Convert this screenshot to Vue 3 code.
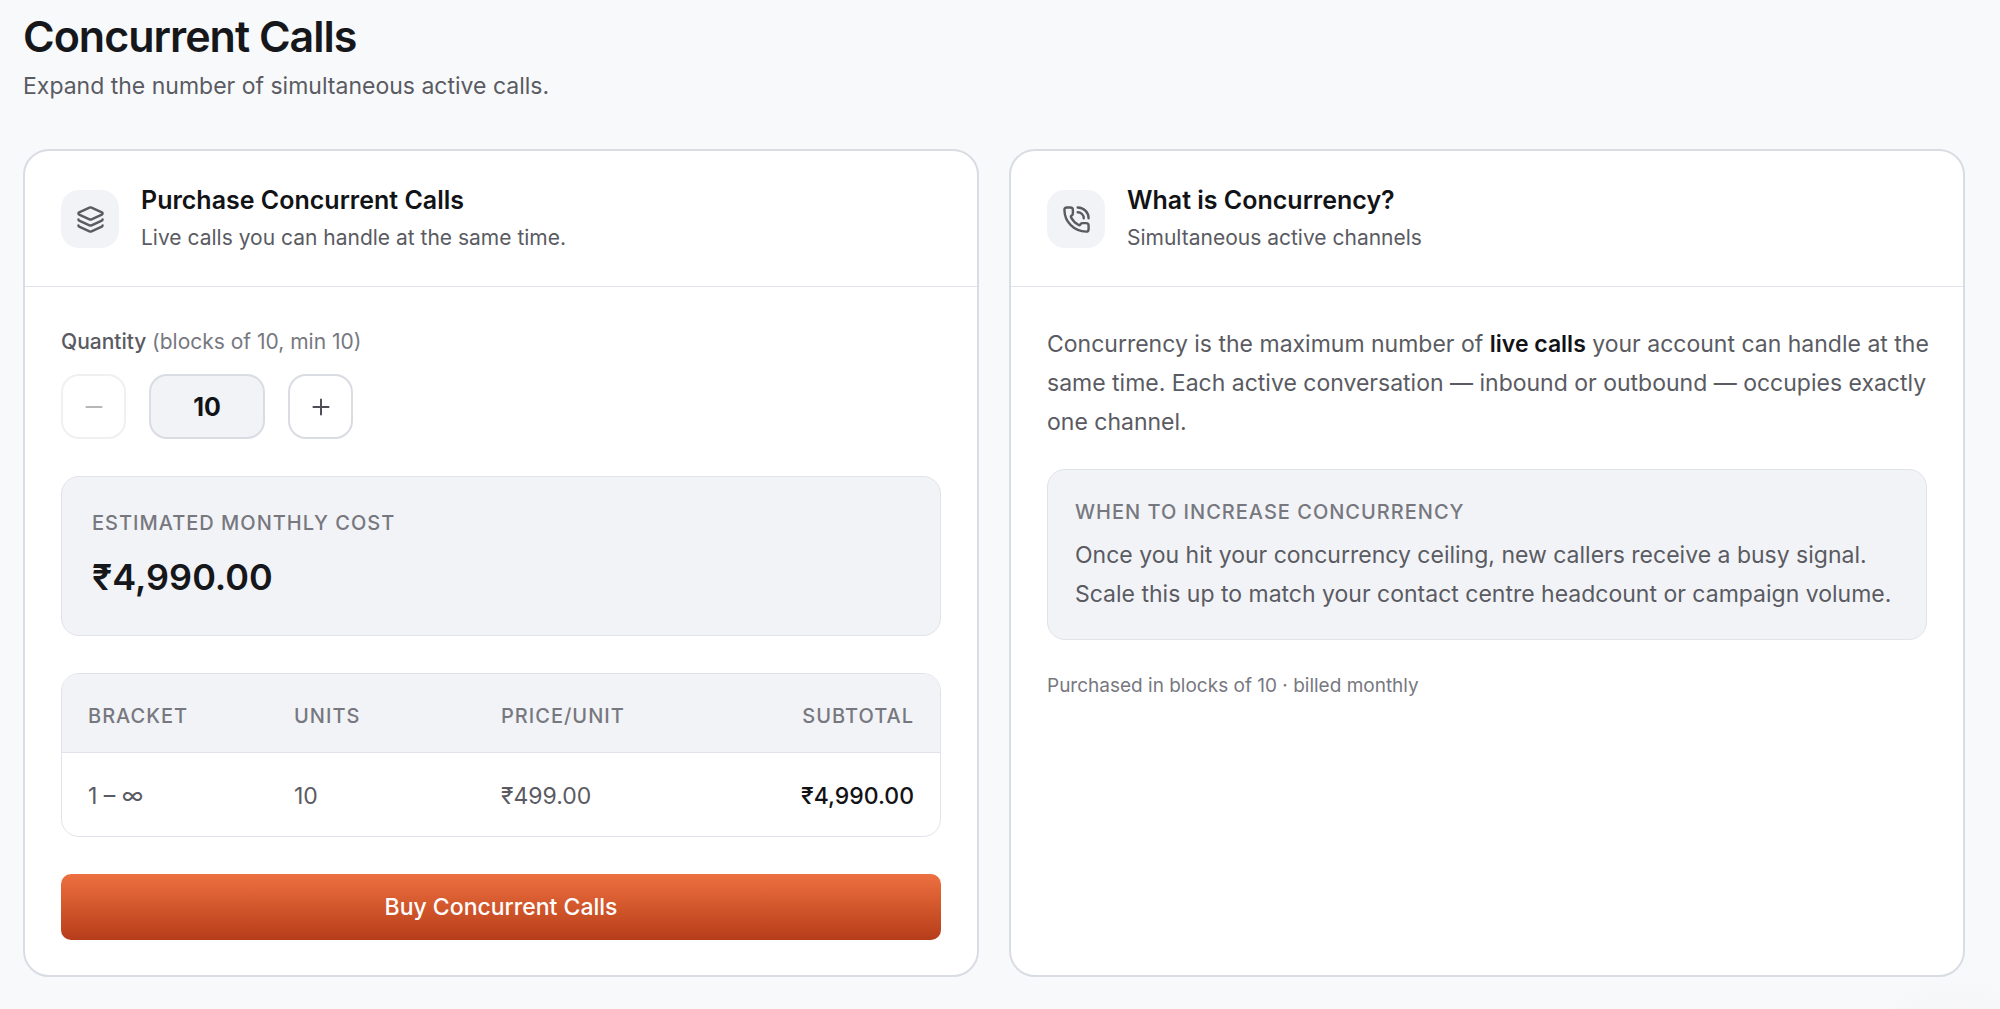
<script setup>
import { computed, ref } from 'vue'

const BLOCK = 10
const UNIT_PRICE = 499

const quantity = ref(BLOCK)
const atMinimum = computed(() => quantity.value <= BLOCK)

const money = (value) =>
  '₹' + value.toLocaleString('en-IN', { minimumFractionDigits: 2, maximumFractionDigits: 2 })

const total = computed(() => money(quantity.value * UNIT_PRICE))

const rows = computed(() => [
  { bracket: '1 – ∞', units: quantity.value, price: money(UNIT_PRICE), subtotal: total.value }
])

function step(direction) {
  quantity.value = Math.max(BLOCK, quantity.value + direction * BLOCK)
}
</script>

<template>
  <main class="page">
    <header class="page-head">
      <h1>Concurrent Calls</h1>
      <p>Expand the number of simultaneous active calls.</p>
    </header>

    <div class="cards">
      <section class="card">
        <header class="card-head">
          <span class="badge">
            <svg class="icon" viewBox="0 0 24 24" aria-hidden="true">
              <path d="M12.83 2.18a2 2 0 0 0-1.66 0L2.6 6.08a1 1 0 0 0 0 1.83l8.58 3.91a2 2 0 0 0 1.66 0l8.58-3.9a1 1 0 0 0 0-1.83z" />
              <path d="M2 12a1 1 0 0 0 .58.91l8.6 3.91a2 2 0 0 0 1.65 0l8.58-3.9A1 1 0 0 0 22 12" />
              <path d="M2 17a1 1 0 0 0 .58.91l8.6 3.91a2 2 0 0 0 1.65 0l8.58-3.9A1 1 0 0 0 22 17" />
            </svg>
          </span>
          <div class="card-title">
            <h2>Purchase Concurrent Calls</h2>
            <p>Live calls you can handle at the same time.</p>
          </div>
        </header>

        <div class="card-body purchase">
          <div class="quantity">
            <label for="quantity">Quantity <span>(blocks of 10, min 10)</span></label>
            <div class="stepper">
              <button type="button" aria-label="Decrease quantity" :disabled="atMinimum" @click="step(-1)">
                <svg class="sign" viewBox="0 0 24 24" aria-hidden="true"><path d="M5 12h14" /></svg>
              </button>
              <input id="quantity" type="text" inputmode="numeric" readonly :value="quantity" />
              <button type="button" aria-label="Increase quantity" @click="step(1)">
                <svg class="sign" viewBox="0 0 24 24" aria-hidden="true"><path d="M5 12h14M12 5v14" /></svg>
              </button>
            </div>
          </div>

          <div class="panel cost">
            <p class="eyebrow">Estimated monthly cost</p>
            <p class="amount">{{ total }}</p>
          </div>

          <div class="table-frame">
            <table>
              <thead>
                <tr>
                  <th scope="col">Bracket</th>
                  <th scope="col">Units</th>
                  <th scope="col">Price/unit</th>
                  <th scope="col">Subtotal</th>
                </tr>
              </thead>
              <tbody>
                <tr v-for="row in rows" :key="row.bracket">
                  <td>{{ row.bracket }}</td>
                  <td>{{ row.units }}</td>
                  <td>{{ row.price }}</td>
                  <td>{{ row.subtotal }}</td>
                </tr>
              </tbody>
            </table>
          </div>

          <button type="button" class="buy">Buy Concurrent Calls</button>
        </div>
      </section>

      <section class="card">
        <header class="card-head">
          <span class="badge">
            <svg class="icon" viewBox="0 0 24 24" aria-hidden="true">
              <path d="M13 2a9 9 0 0 1 9 9" />
              <path d="M13 6a5 5 0 0 1 5 5" />
              <path d="M13.832 16.568a1 1 0 0 0 1.213-.303l.355-.465A2 2 0 0 1 17 15h3a2 2 0 0 1 2 2v3a2 2 0 0 1-2 2A18 18 0 0 1 2 4a2 2 0 0 1 2-2h3a2 2 0 0 1 2 2v3a2 2 0 0 1-.8 1.6l-.468.351a1 1 0 0 0-.292 1.233 14 14 0 0 0 6.392 6.384" />
            </svg>
          </span>
          <div class="card-title">
            <h2>What is Concurrency?</h2>
            <p>Simultaneous active channels</p>
          </div>
        </header>

        <div class="card-body about">
          <p class="copy lead">
            Concurrency is the maximum number of <strong>live calls</strong> your account can handle at the
            same time. Each active conversation — inbound or outbound — occupies exactly one channel.
          </p>
          <div class="panel hint">
            <p class="eyebrow">When to increase concurrency</p>
            <p class="copy">
              Once you hit your concurrency ceiling, new callers receive a busy signal. Scale this up to
              match your contact centre headcount or campaign volume.
            </p>
          </div>
          <p class="note">Purchased in blocks of 10 · billed monthly</p>
        </div>
      </section>
    </div>
  </main>
</template>

<style>
body {
  margin: 0;
  background: #f8f9fb;
}
</style>

<style scoped>
.page {
  box-sizing: border-box;
  min-height: 100vh;
  padding: 10px 35px 31px 23px;
  background: radial-gradient(circle 100px at calc(100% - 45px) calc(100% + 64px), #f4f4f5 40%, #f8f9fb 100%);
  color: #5a5b62;
  font-family: Inter, "Noto Sans", sans-serif;
  font-size: 23px;
}

h1,
h2,
p {
  margin: 0;
}

.page-head {
  margin-bottom: 47px;
}

h1 {
  color: #16171a;
  font-size: 43px;
  font-weight: 600;
  line-height: 52px;
  letter-spacing: -1px;
}

.page-head p {
  margin-top: 8px;
  line-height: 32px;
}

.cards {
  display: grid;
  grid-template-columns: repeat(auto-fit, minmax(min(100%, 640px), 1fr));
  gap: 30px;
}

.card {
  border: 2px solid #dadce3;
  border-radius: 26px;
  background: #fff;
}

.card-head {
  display: flex;
  align-items: center;
  gap: 22px;
  padding: 34px 36px 33px;
  border-bottom: 1px solid #e1e3ea;
}

.badge {
  display: grid;
  flex: none;
  place-items: center;
  width: 58px;
  height: 58px;
  border-radius: 18px;
  background: #f2f3f7;
}

.icon,
.sign {
  fill: none;
  stroke: currentColor;
  stroke-linecap: round;
  stroke-linejoin: round;
}

.icon {
  width: 29px;
  height: 29px;
  stroke-width: 2;
}

.sign {
  width: 26px;
  height: 26px;
  stroke-width: 1.8;
}

.card-title {
  display: grid;
  gap: 8px;
  line-height: 30px;
}

h2 {
  color: #121316;
  font-size: 25px;
  font-weight: 600;
}

.card-title p {
  font-size: 21px;
}

.card-body {
  padding: 38px 36px 35px;
}

.purchase {
  display: grid;
  gap: 37px;
}

.quantity {
  display: grid;
  gap: 15px;
  font-size: 21px;
  line-height: 34px;
}

.quantity label {
  font-weight: 500;
}

.quantity label span {
  color: #77787f;
  font-weight: 400;
}

.stepper {
  display: flex;
  gap: 23px;
}

.stepper button,
.stepper input {
  box-sizing: border-box;
  height: 65px;
  padding: 0;
  border: 2px solid #dadce3;
  border-radius: 18px;
}

.stepper button {
  display: grid;
  place-items: center;
  width: 65px;
  background: #fff;
  color: #4d4e55;
}

.stepper button:disabled {
  opacity: 0.4;
}

.stepper input {
  width: 116px;
  background: #f2f3f7;
  color: #121316;
  font-family: inherit;
  font-size: 25px;
  font-weight: 700;
  text-align: center;
}

.panel,
.table-frame {
  border: 1px solid #e1e3ea;
  border-radius: 18px;
}

.panel {
  background: #f2f3f7;
}

.cost {
  padding: 29px 30px;
}

.eyebrow,
th {
  color: #77787f;
  font-size: 20px;
  font-weight: 500;
  line-height: 34px;
  letter-spacing: 1px;
  text-transform: uppercase;
}

.amount {
  margin-top: 8px;
  color: #16171a;
  font-size: 36px;
  font-weight: 600;
  line-height: 58px;
}

.table-frame {
  overflow: hidden;
}

table {
  width: 100%;
  border-collapse: separate;
  border-spacing: 0;
  table-layout: fixed;
}

th {
  box-sizing: border-box;
  padding: 25px 0 19px;
  border-bottom: 1px solid #e1e3ea;
  background: #f2f3f7;
  text-align: left;
}

td {
  padding: 26px 0 22px;
  line-height: 35px;
}

th:first-child,
th:last-child {
  width: 232px;
}

th:first-child,
td:first-child {
  padding-left: 26px;
}

th:last-child,
td:last-child {
  padding-right: 26px;
  text-align: right;
}

td:last-child {
  color: #121316;
  font-weight: 500;
}

.buy {
  height: 66px;
  padding: 0 24px;
  border: 0;
  border-radius: 10px;
  background: linear-gradient(#ed7041, #cf5429 55%, #b63d1b);
  color: #fff;
  font-family: inherit;
  font-size: 23px;
  font-weight: 500;
}

.copy {
  line-height: 39px;
}

.lead {
  margin-right: -10px;
}

.lead strong {
  color: #121316;
  font-weight: 600;
}

.hint {
  margin: 27px 0 29px;
  padding: 25px 27px;
}

.hint .copy {
  margin-top: 7px;
}

.note {
  color: #77787f;
  font-size: 19px;
  line-height: 34px;
}
</style>
